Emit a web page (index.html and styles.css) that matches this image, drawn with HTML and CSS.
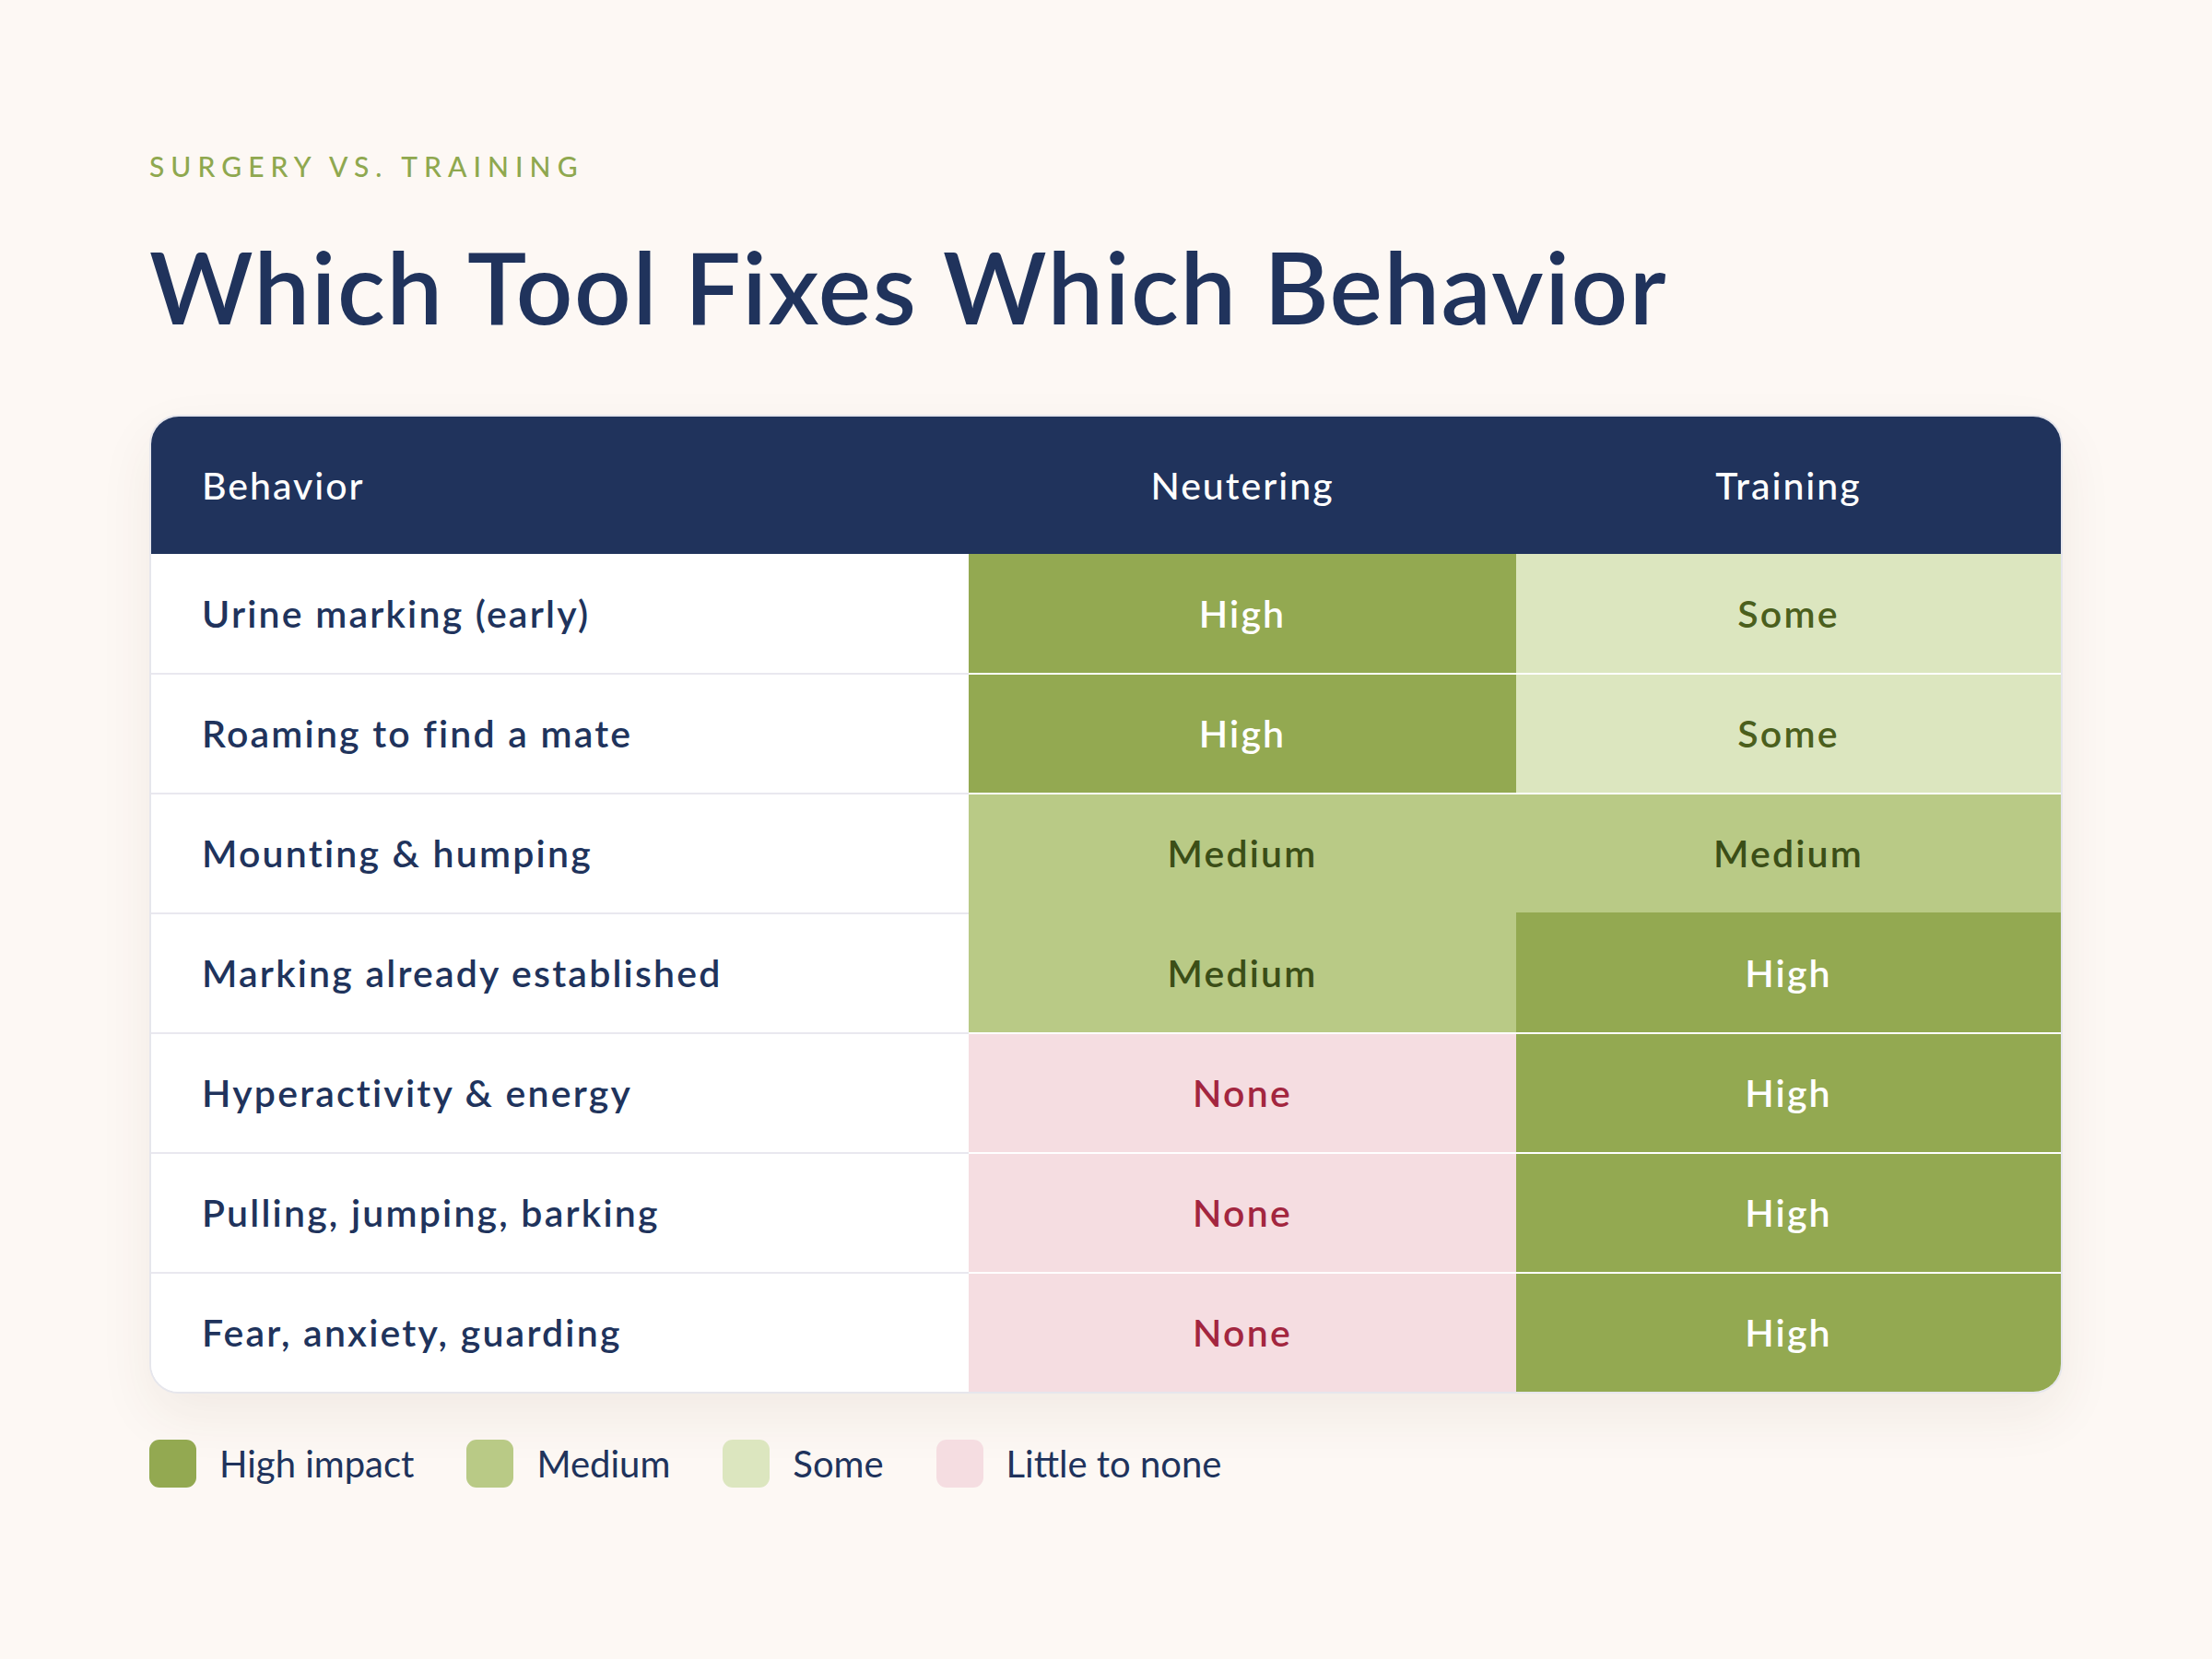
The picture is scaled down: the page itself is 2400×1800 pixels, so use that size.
FILE: index.html
```html
<!DOCTYPE html>
<html lang="en">
<head>
<meta charset="utf-8">
<title>Which Tool Fixes Which Behavior</title>
<link rel="stylesheet" href="styles.css">
</head>
<body>
<main class="page">
  <p class="eyebrow">SURGERY VS. TRAINING</p>
  <h1 class="title">Which Tool Fixes Which Behavior</h1>

  <div class="card">
    <div class="grid">
      <div class="th th-left">Behavior</div>
      <div class="th">Neutering</div>
      <div class="th">Training</div>

      <div class="td label first">Urine marking (early)</div>
      <div class="td high first">High</div>
      <div class="td some first">Some</div>

      <div class="td label">Roaming to find a mate</div>
      <div class="td high">High</div>
      <div class="td some">Some</div>

      <div class="td label">Mounting &amp; humping</div>
      <div class="td medium">Medium</div>
      <div class="td medium">Medium</div>

      <div class="td label">Marking already established</div>
      <div class="td medium flush">Medium</div>
      <div class="td high flush">High</div>

      <div class="td label">Hyperactivity &amp; energy</div>
      <div class="td none">None</div>
      <div class="td high">High</div>

      <div class="td label">Pulling, jumping, barking</div>
      <div class="td none">None</div>
      <div class="td high">High</div>

      <div class="td label">Fear, anxiety, guarding</div>
      <div class="td none">None</div>
      <div class="td high">High</div>
    </div>
  </div>

  <ul class="legend">
    <li class="legend-item"><span class="swatch sw-high"></span>High impact</li>
    <li class="legend-item"><span class="swatch sw-medium"></span>Medium</li>
    <li class="legend-item"><span class="swatch sw-some"></span>Some</li>
    <li class="legend-item"><span class="swatch sw-none"></span>Little to none</li>
  </ul>
</main>
</body>
</html>
```

FILE: styles.css
```css
html, body {
  margin: 0;
  padding: 0;
}

body {
  background: #fdf8f4;
  font-family: "Lato", "Noto Sans", sans-serif;
  color: #20335c;
}

.page {
  padding: 162px 162px 100px 162px;
}

.eyebrow {
  margin: 0;
  font-size: 30px;
  line-height: 36px;
  letter-spacing: 0.235em;
  color: #8fa84f;
  font-weight: 500;
}

.title {
  margin: 48px 0 0 0;
  font-size: 108px;
  line-height: 1.2;
  font-weight: 600;
  color: #20335c;
  letter-spacing: 1.6px;
}

.card {
  margin-top: 74px;
  width: 2076px;
  box-sizing: border-box;
  border: 2px solid #e6e6ec;
  border-radius: 32px;
  overflow: hidden;
  background: #ffffff;
  box-shadow: 0 24px 60px rgba(80, 60, 30, 0.07);
}

.grid {
  display: grid;
  grid-template-columns: 887px 594px 1fr;
}

.th {
  background: #20335c;
  color: #ffffff;
  height: 149px;
  display: flex;
  align-items: center;
  justify-content: center;
  font-size: 41px;
  font-weight: 500;
  letter-spacing: 2px;
}

.th-left {
  justify-content: flex-start;
  padding-left: 55px;
}

.td {
  height: 128px;
  box-sizing: content-box;
  border-top: 2px solid #ffffff;
  display: flex;
  align-items: center;
  justify-content: center;
  font-size: 41px;
  font-weight: 600;
  letter-spacing: 2.2px;
}

.td.first {
  border-top: 0;
  height: 129px;
}

.td.label {
  justify-content: flex-start;
  padding-left: 55px;
  border-top-color: #e9e8ef;
  color: #20335c;
  background: #ffffff;
}

.td.label.first {
  border-top: 0;
}

.td.flush {
  border-top-color: transparent;
}

.high {
  background: #93a951;
  color: #ffffff;
}

.medium {
  background: #b9ca86;
  color: #3b4e17;
}

.some {
  background: #dce6bf;
  color: #4b5f1d;
}

.none {
  background: #f5dde1;
  color: #a3263f;
}

.legend {
  list-style: none;
  margin: 50px 0 0 0;
  padding: 0;
  display: flex;
  align-items: center;
  gap: 57px;
}

.legend-item {
  display: flex;
  align-items: center;
  gap: 25px;
  font-size: 40px;
  font-weight: 400;
  color: #20335c;
  height: 52px;
}

.swatch {
  width: 51px;
  height: 52px;
  border-radius: 11px;
  flex: none;
}

.sw-high { background: #93a951; }
.sw-medium { background: #b9ca86; }
.sw-some { background: #dce6bf; }
.sw-none { background: #f5dde1; }
```
